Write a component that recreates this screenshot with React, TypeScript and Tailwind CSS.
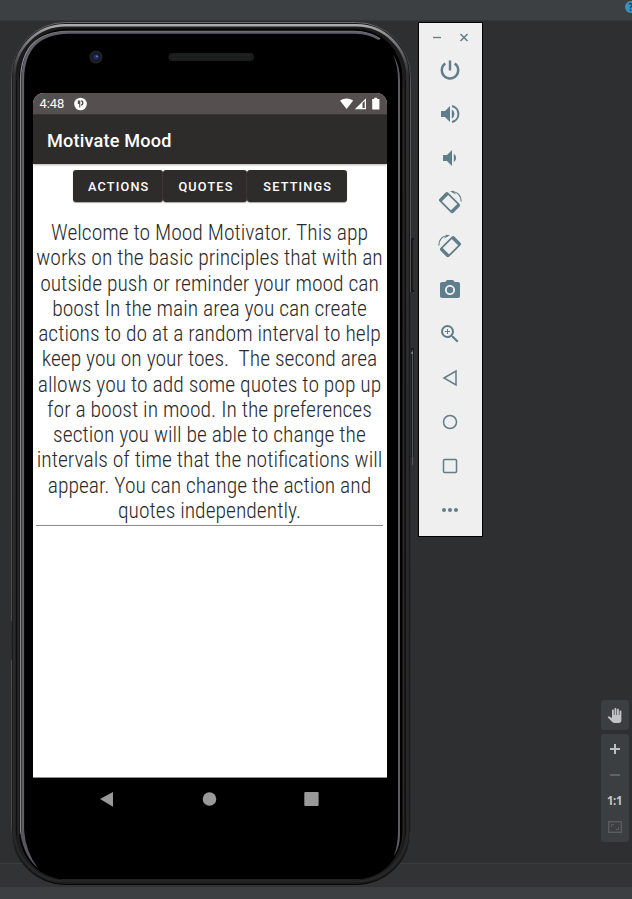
import React from "react";
import { MdPhotoCamera, MdZoomIn, MdPanTool, MdMoreHoriz } from "react-icons/md";

const welcomeLines = [
  "Welcome to Mood Motivator. This app",
  "works on the basic principles that with an",
  "outside push or reminder your mood can",
  "boost In the main area you can create",
  "actions to do at a random interval to help",
  "keep you on your toes.\u00a0 The second area",
  "allows you to add some quotes to pop up",
  "for a boost in mood. In the preferences",
  "section you will be able to change the",
  "intervals of time that the notifications will",
  "appear. You can change the action and",
  "quotes independently.",
];

function DeviceFrame() {
  return (
    <svg className="absolute inset-0 h-full w-full" viewBox="11 22 403 864" fill="none">
      <defs>
        <linearGradient id="rim" x1="0" y1="22" x2="0" y2="885" gradientUnits="userSpaceOnUse">
          <stop offset="0" stopColor="#6b6b6d" />
          <stop offset="0.03" stopColor="#3a3a3b" />
          <stop offset="0.08" stopColor="#585755" />
          <stop offset="0.93" stopColor="#4a4947" />
          <stop offset="0.96" stopColor="#1c1c1d" />
          <stop offset="1" stopColor="#060606" />
        </linearGradient>
        <linearGradient id="shine" x1="0" y1="22" x2="0" y2="885" gradientUnits="userSpaceOnUse">
          <stop offset="0" stopColor="#b4b4b6" />
          <stop offset="0.015" stopColor="#8b8b8d" />
          <stop offset="0.06" stopColor="#303032" />
          <stop offset="1" stopColor="#272728" />
        </linearGradient>
        <linearGradient id="edge" x1="0" y1="22" x2="0" y2="885" gradientUnits="userSpaceOnUse">
          <stop offset="0" stopColor="#050505" />
          <stop offset="0.08" stopColor="#38383a" />
          <stop offset="0.92" stopColor="#38383a" />
          <stop offset="1" stopColor="#1a1a1b" />
        </linearGradient>
      </defs>
      <rect x="410" y="238" width="4" height="54" fill="#171718" />
      <path d="M413.500 240v50" stroke="#303032" />
      <rect x="410" y="348" width="4" height="109" fill="#1b1b1c" />
      <path d="M412.500 350v115" stroke="#555657" />
      <path d="M410 353h3" stroke="#b0b0b0" />
      <rect x="11.500" y="22.500" width="399" height="862" rx="54" fill="#1b1b1c" stroke="url(#rim)" />
      <path d="M11.500 621v39" stroke="#2a2b2c" />
      <path d="M410.500 292v540" stroke="#2b2a2a" />
      <rect x="14.200" y="25.300" width="393.300" height="855.700" rx="51" stroke="url(#shine)" strokeWidth="2.600" />
      <path d="M16.500 80v755M405.500 80v755" stroke="#101011" />
      <rect x="18.500" y="29" width="384.500" height="851" rx="48" fill="#000" stroke="url(#edge)" strokeWidth="0.800" />
      <path d="M62 880.500H360" stroke="#242424" strokeWidth="3" />
      <path d="M20.500 834V80Q21 32.500 68 31.500H355Q370 32 380 39" stroke="#8a888b" strokeWidth="1.300" />
      <path d="M22.800 834V80Q23 33.500 68 32.500H355Q370 33 379 39" stroke="#5e5f69" strokeWidth="2.600" />
      <path d="M20 832Q24 857 38 868Q26 853 24 830Z" fill="#55565e" />
      <path d="M393 54Q400 66 400 80V835Q400 847 394 856Q398 845 398 830V80Q398 66 393 54Z" fill="#5b5b60" />
      <circle cx="96" cy="57" r="6.600" fill="#202124" />
      <circle cx="96" cy="57" r="4.200" fill="#141827" />
      <circle cx="96" cy="57" r="2.700" fill="#242f68" />
      <circle cx="97" cy="56.400" r="0.800" fill="#8190c0" />
      <rect x="168.500" y="53" width="85.500" height="8" rx="4" fill="#1b1c1c" />
      <path d="M172 55.500H250M173 58.500H251" stroke="#252626" strokeDasharray="1 1" />
    </svg>
  );
}

function StatusBar() {
  return (
    <div className="flex h-[21px] items-center bg-[#564f4f] pl-[6.5px] pr-[6px] text-white">
      <span className="w-[25.5px] text-[12.9px] leading-[21px]">4:48</span>
      <svg className="ml-[8px] h-[14px] w-[14px]" viewBox="0 0 14 14">
        <circle cx="7.500" cy="7" r="6.300" fill="#fff" />
        <path d="M4.800 3.500H7.300V10.500H6.200V7H4.800Z" fill="#564f4f" />
        <path d="M8.200 3.800A2.300 2.300 0 0 1 8.200 8.200" fill="none" stroke="#564f4f" strokeWidth="1.500" />
      </svg>
      <svg className="ml-auto h-[14px] w-[42px]" viewBox="0 0 42 14" fill="#fff">
        <path d="M1 3.600Q7.500 -0.800 14.200 3.600L7.600 12Z" />
        <path d="M15.800 12.200L27 1.200V12.200Z" />
        <path d="M23.500 6L25.700 4V11H23.500Z" fill="#564f4f" />
        <path d="M33.200 2H35.200V0.800H38.200V2H40.400V12.400H33.200Z" />
      </svg>
    </div>
  );
}

function Phone() {
  return (
    <section className="relative ml-[11px] mt-px h-[864px] w-[403px] shrink-0">
      <DeviceFrame />
      <div className="relative ml-[22px] pt-[71px]">
        <div className="flex h-[685px] w-[354px] flex-col overflow-hidden rounded-t-[11px] border-b border-[#8d8d8d] bg-white font-[Roboto,sans-serif]">
          <StatusBar />
          <header className="flex h-[50px] shrink-0 items-center border-t border-[#383535] bg-[#2e2c2b] pl-[14px] pt-[3px] text-[18.1px] font-medium tracking-[0.2px] text-white shadow-[0_1px_2px_#77707088]">
            Motivate Mood
          </header>
          <nav className="ml-[39.5px] mt-[6px] flex h-[32px] w-[274px] shrink-0 text-[12.7px] font-medium tracking-[1.18px] text-white">
            <button className="w-[90.5px] rounded-[3px] bg-[#2e2c2b] pl-[2px] pt-px shadow-[0_1px_1px_#a9a4a4]">ACTIONS</button>
            <button className="w-[84px] rounded-[3px] bg-[#2e2c2b] pl-[2px] pt-px shadow-[0_1px_1px_#a9a4a4]">QUOTES</button>
            <button className="w-[99.5px] rounded-[3px] bg-[#2e2c2b] pl-[2px] pt-px shadow-[0_1px_1px_#a9a4a4]">SETTINGS</button>
          </nav>
          <div className="ml-[3px] mr-[4px] mt-[18px] border-b border-[#8b8b8b] pb-[2px] text-center font-['Roboto_Condensed',Roboto,sans-serif] text-[21.6px] font-[280] leading-[25.25px] text-[#2a2a2a] [font-stretch:75%]">
            {welcomeLines.map((line) => (
              <p key={line} className="whitespace-nowrap">{line}</p>
            ))}
          </div>
        </div>
        <svg className="h-[44px] w-[354px]" viewBox="0 0 354 44" fill="#999">
          <path d="M67 21L80 14V28.800Z" />
          <circle cx="176.500" cy="21" r="6.800" />
          <rect x="271.300" y="14" width="14.300" height="14" rx="1" />
        </svg>
      </div>
    </section>
  );
}

function PowerIcon() {
  return (
    <svg className="h-6 w-6" viewBox="0 0 24 24" fill="none" stroke="currentColor" strokeWidth="2.400">
      <path d="M12 2.500V12.500" />
      <path d="M7.300 5.600A8.200 8.200 0 1 0 16.700 5.600" />
    </svg>
  );
}

function VolumeIcon({ loud }: { loud?: boolean }) {
  return (
    <svg className="h-6 w-6" viewBox="0 0 24 24" fill="currentColor">
      {loud ? (
        <>
          <path d="M3 9V15H7L12 20V4L7 9Z" />
          <path d="M13.800 7.600A5 5 0 0 1 13.800 16.400Z" />
          <path d="M14 4A8.200 8.200 0 0 1 14 20" fill="none" stroke="currentColor" strokeWidth="2" />
        </>
      ) : (
        <>
          <path d="M5 9V15H9L14 20V4L9 9Z" />
          <path d="M15.800 7.800A5 5 0 0 1 15.800 16.200Z" />
        </>
      )}
    </svg>
  );
}

function RotateIcon({ flipped }: { flipped?: boolean }) {
  return (
    <svg className={flipped ? "h-6 w-6 -scale-x-100" : "h-6 w-6"} viewBox="0 0 24 24" fill="none" stroke="currentColor">
      <g transform="rotate(-45 11.500 12.700)">
        <rect x="6.200" y="3.700" width="10.600" height="18" rx="1.200" strokeWidth="1.700" />
        <path d="M6.500 4.800H16.500M6.500 20.600H16.500" strokeWidth="3" />
      </g>
      <path d="M14 1.800C19 1.200 23.200 5.500 23.200 11.500" strokeWidth="1.200" />
      <path d="M12 1.200L15.500 0.700L18 4.500Z" fill="currentColor" stroke="none" />
    </svg>
  );
}

function EmulatorToolbar() {
  return (
    <aside className="ml-[4px] mt-px flex h-[515px] w-[65px] shrink-0 flex-col items-center border border-black bg-[#efefef] pr-px text-[#607d8b]">
      <svg className="h-[28px] w-[62px]" viewBox="0 0 62 28" fill="none" stroke="currentColor">
        <path d="M14 14.500H22" strokeWidth="1.300" />
        <path d="M41.500 11L48.500 18M48.500 11L41.500 18" strokeWidth="1.500" />
      </svg>
      <div className="mt-[7px] flex flex-col items-center gap-5">
        <PowerIcon />
        <VolumeIcon loud />
        <VolumeIcon />
        <RotateIcon />
        <RotateIcon flipped />
        <MdPhotoCamera className="h-6 w-6" />
        <MdZoomIn className="h-6 w-6" />
        <svg className="h-6 w-6" viewBox="0 0 24 24" fill="none" stroke="currentColor" strokeWidth="1.500">
          <path d="M6 12L18 5V19Z" />
        </svg>
        <svg className="h-6 w-6" viewBox="0 0 24 24" fill="none" stroke="currentColor" strokeWidth="1.500">
          <circle cx="12" cy="12" r="6.500" />
        </svg>
        <svg className="h-6 w-6" viewBox="0 0 24 24" fill="none" stroke="currentColor" strokeWidth="1.500">
          <rect x="5.500" y="5.500" width="13" height="13" rx="1" />
        </svg>
        <MdMoreHoriz className="h-6 w-6" />
      </div>
    </aside>
  );
}

function ZoomControls() {
  return (
    <div className="ml-auto mr-[3px] mt-[679px] flex w-7 shrink-0 flex-col gap-1 text-[#c2c3c4]">
      <button className="flex h-[30px] items-center justify-center rounded-[3px] bg-[#3c3f41] pr-px">
        <MdPanTool className="h-[15px] w-[15px]" />
      </button>
      <div className="flex h-[108px] flex-col items-center rounded-[3px] bg-[#3c3f41]">
        <svg className="h-[54px] w-7" viewBox="0 0 28 54" fill="none" strokeWidth="2">
          <path d="M9 15H19M14 10V20" stroke="#c0c0c0" />
          <path d="M9 41H19" stroke="#606263" />
        </svg>
        <span className="h-[26px] pr-px font-['Open_Sans',sans-serif] text-[11.5px] font-bold leading-[26px] tracking-[-0.5px]">1:1</span>
        <svg className="mt-[6px] h-[14px] w-[14px]" viewBox="0 0 14 14" fill="none" stroke="#595b5d">
          <rect x="0.700" y="1.700" width="12.600" height="10.600" strokeWidth="1.400" />
          <path d="M3.500 7V4.500H6M8 9.500H10.500V7" />
        </svg>
      </div>
    </div>
  );
}

export default function App() {
  return (
    <div className="flex h-[899px] w-[632px] flex-col overflow-hidden bg-[#3c3f41]">
      <header className="flex h-[21px] shrink-0 items-start justify-end overflow-hidden border-b border-[#333638] bg-[#3c4043]">
        <span className="-mr-[5px] mt-px flex h-3 w-3 shrink-0 items-center justify-center rounded-full bg-[#3592c4] font-['Open_Sans',sans-serif] text-[10px] font-bold text-[#263f4c]">?</span>
      </header>
      <main className="flex h-[866px] shrink-0 items-start bg-[linear-gradient(#2e2f31_0_842px,#3b3c3e_842px_843px,#323335_843px)]">
        <Phone />
        <EmulatorToolbar />
        <ZoomControls />
      </main>
      <footer className="h-3 shrink-0 bg-[#3c3f41]" />
    </div>
  );
}
